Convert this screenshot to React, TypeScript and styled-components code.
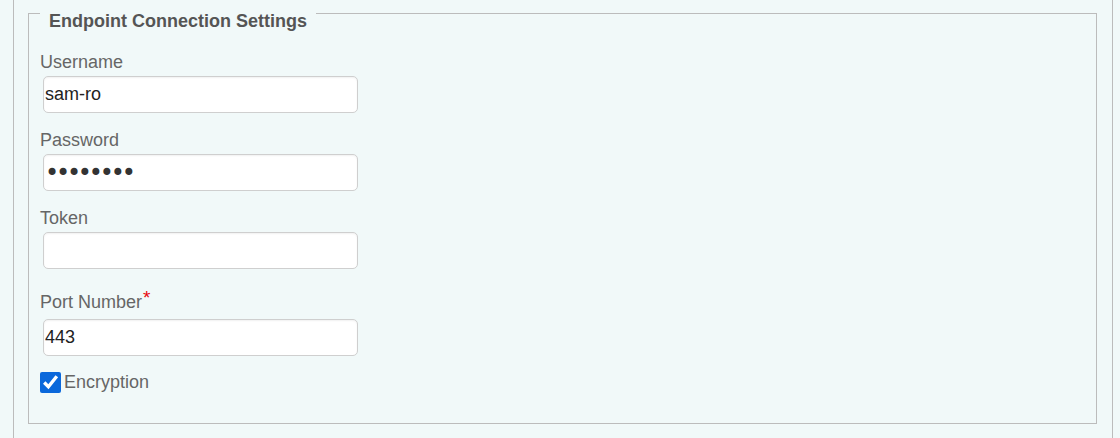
import React, { useState } from "react";
import styled, { createGlobalStyle } from "styled-components";

const GlobalStyle = createGlobalStyle`
  html, body {
    margin: 0;
    padding: 0;
    background: #f1f9f9;
    font-family: "Liberation Sans", Arial, sans-serif;
  }
`;

const Panel = styled.div`
  display: flow-root;
  box-sizing: border-box;
  min-height: 100vh;
  margin: 0 7px 0 13px;
  padding: 0 15px 0 14px;
  border-left: 1px solid #bcbcbc;
  border-right: 1px solid #bcbcbc;
`;

const Fieldset = styled.fieldset`
  margin: -5px 0 0;
  min-width: 0;
  padding: 19px 11px 30px;
  border: 1px solid #bcbcbc;
`;

const Legend = styled.legend`
  padding: 16px 9px 0;
  font-size: 18px;
  line-height: 21px;
  font-weight: bold;
  color: #555;
`;

const Field = styled.div`
  display: flex;
  flex-direction: column;
  align-items: flex-start;
  margin-bottom: 16px;
`;

const Label = styled.label<{ $required?: boolean }>`
  font-size: 18px;
  line-height: 21px;
  color: #666;
  padding-top: ${(p) => (p.$required ? "7px" : "1px")};
  margin-bottom: ${(p) => (p.$required ? "6px" : "3px")};
`;

const Star = styled.span`
  color: #e8080f;
  font-size: 19px;
  line-height: 0;
  vertical-align: 4px;
  margin-left: 1px;
`;

const Input = styled.input<{ $mask?: boolean }>`
  box-sizing: border-box;
  width: 315px;
  height: 37px;
  margin: 0 0 0 3px;
  padding: 0 1px;
  border: 1px solid #cfcfcf;
  border-radius: 5px;
  background: #fff;
  box-shadow: inset 0 1px 2px rgba(0, 0, 0, 0.06);
  font-family: ${(p) => (p.$mask ? '"DejaVu Sans", sans-serif' : '"Liberation Sans", Arial, sans-serif')};
  font-size: ${(p) => (p.$mask ? "24px" : "18px")};
  letter-spacing: ${(p) => (p.$mask ? "-3.2px" : "normal")};
  color: ${(p) => (p.$mask ? "#333" : "#222")};
  outline: none;
`;

const CheckRow = styled.label`
  display: flex;
  align-items: center;
  gap: 3px;
  margin-top: 4px;
  font-size: 18px;
  line-height: 21px;
  color: #666;
`;

const Check = styled.input`
  width: 21px;
  height: 21px;
  margin: 0;
  accent-color: #0b68db;
`;

export default function App() {
  const [user, setUser] = useState("sam-ro");
  const [pass, setPass] = useState("password");
  const [token, setToken] = useState("");
  const [port, setPort] = useState("443");
  const [enc, setEnc] = useState(true);

  return (
    <>
      <GlobalStyle />
      <Panel>
        <Fieldset>
          <Legend>Endpoint Connection Settings</Legend>
          <Field>
            <Label htmlFor="username">Username</Label>
            <Input id="username" value={user} onChange={(e) => setUser(e.target.value)} />
          </Field>
          <Field>
            <Label htmlFor="password">Password</Label>
            <Input id="password" type="password" $mask value={pass} onChange={(e) => setPass(e.target.value)} />
          </Field>
          <Field>
            <Label htmlFor="token">Token</Label>
            <Input id="token" value={token} onChange={(e) => setToken(e.target.value)} />
          </Field>
          <Field>
            <Label htmlFor="port" $required>
              Port Number<Star>*</Star>
            </Label>
            <Input id="port" value={port} onChange={(e) => setPort(e.target.value)} />
          </Field>
          <CheckRow>
            <Check type="checkbox" checked={enc} onChange={(e) => setEnc(e.target.checked)} />
            Encryption
          </CheckRow>
        </Fieldset>
      </Panel>
    </>
  );
}
